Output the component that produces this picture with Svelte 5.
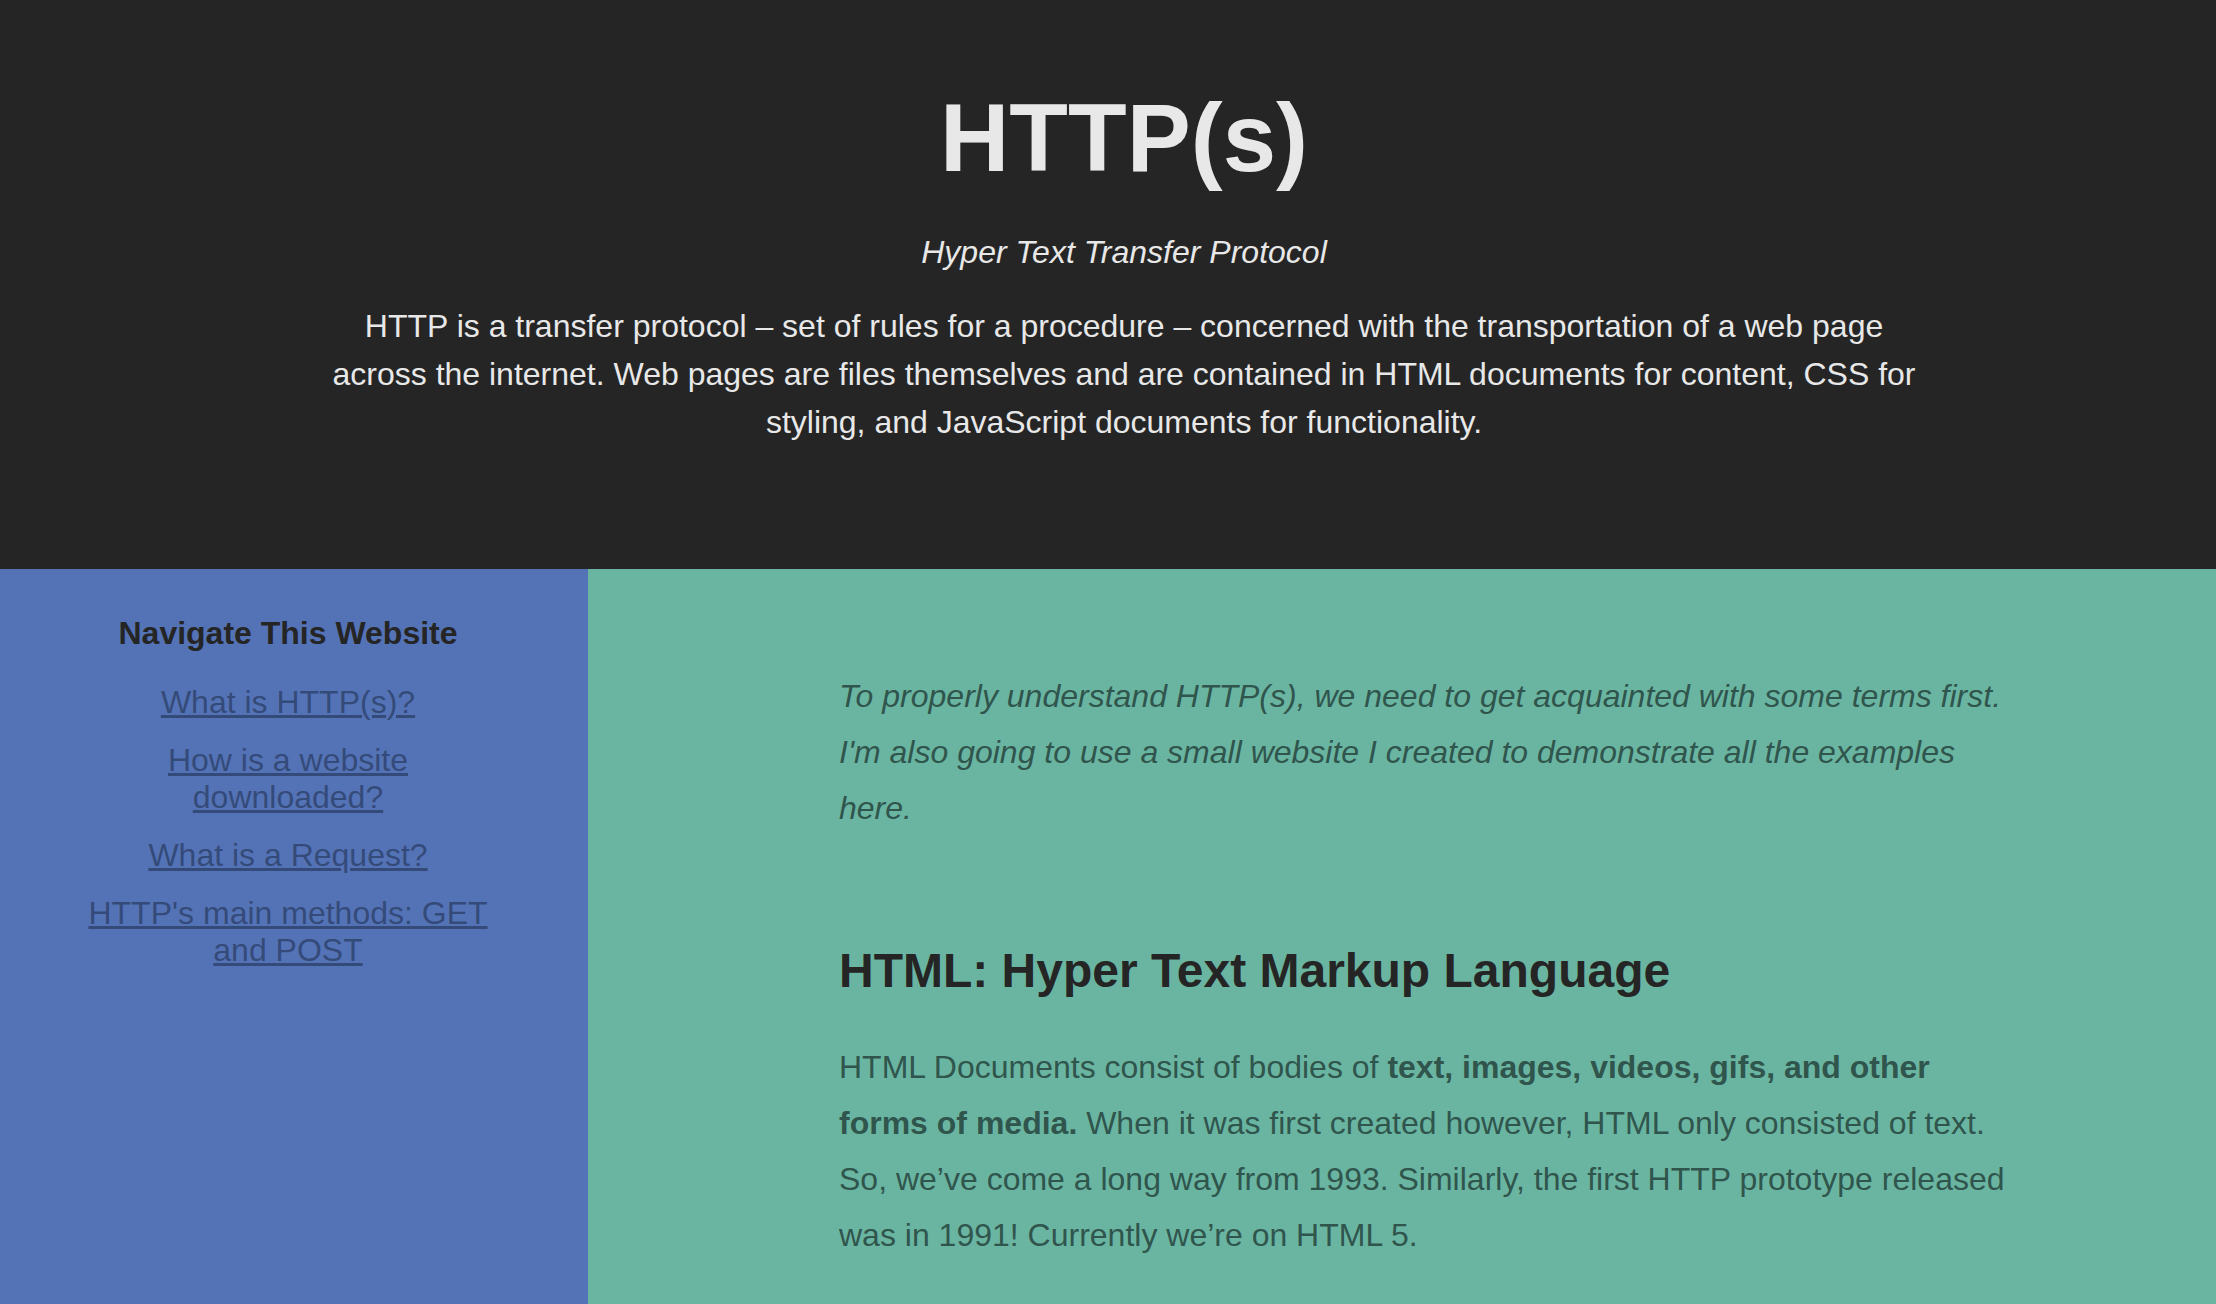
<script>
  const links = [
    { label: 'What is HTTP(s)?', href: '#http' },
    { label: 'How is a website downloaded?', href: '#download' },
    { label: 'What is a Request?', href: '#request' },
    { label: "HTTP's main methods: GET and POST", href: '#methods' }
  ];
</script>

<div class="page">
  <header id="http">
    <div class="intro">
      <h1>HTTP(s)</h1>
      <p class="subtitle"><em>Hyper Text Transfer Protocol</em></p>
      <p>
        HTTP is a transfer protocol – set of rules for a procedure – concerned with the
        transportation of a web page across the internet. Web pages are files themselves and are
        contained in HTML documents for content, CSS for styling, and JavaScript documents for
        functionality.
      </p>
    </div>
  </header>

  <div class="columns">
    <nav aria-labelledby="nav-title">
      <h2 id="nav-title">Navigate This Website</h2>
      <ul>
        {#each links as link}
          <li><a href={link.href}>{link.label}</a></li>
        {/each}
      </ul>
    </nav>

    <main>
      <p>
        <em>
          To properly understand HTTP(s), we need to get acquainted with some terms first. I'm also
          going to use a small website I created to demonstrate all the examples here.
        </em>
      </p>
      <section>
        <h2>HTML: Hyper Text Markup Language</h2>
        <p>
          HTML Documents consist of bodies of
          <strong>text, images, videos, gifs, and other forms of media.</strong>
          When it was first created however, HTML only consisted of text. So, we’ve come a long way
          from 1993. Similarly, the first HTTP prototype released was in 1991! Currently we’re on
          HTML 5.
        </p>
      </section>
    </main>
  </div>
</div>

<style>
  :global(body) {
    margin: 0;
  }

  .page {
    display: flex;
    flex-direction: column;
    min-height: 100vh;
    font-family: Helvetica, 'Liberation Sans', Arial, sans-serif;
    font-size: 32px;
    color: #252525;
  }

  h1,
  h2,
  p,
  ul {
    margin: 0;
    padding: 0;
  }

  header {
    padding: 82px 0 123px 32px;
    background: #252525;
    color: #e8e8e8;
    text-align: center;
    line-height: 48px;
  }

  .intro {
    max-width: 1600px;
    margin: 0 auto;
  }

  h1 {
    font-size: 96px;
    line-height: 112px;
  }

  .subtitle {
    margin: 34px 0 26px;
  }

  .columns {
    flex: 1;
    display: grid;
    grid-template-columns: 588px 1fr;
  }

  nav {
    padding: 46px 92px 46px 80px;
    background: #5473b6;
    text-align: center;
    line-height: 37px;
  }

  nav h2 {
    font-size: 32px;
    margin-bottom: 32px;
  }

  ul {
    display: flex;
    flex-direction: column;
    gap: 21px;
    list-style: none;
  }

  a {
    color: #344b7a;
    text-decoration-thickness: 3px;
    text-underline-offset: 2px;
  }

  main {
    padding: 99px 200px 56px 251px;
    background: #6ab5a2;
    line-height: 56px;
  }

  main p {
    color: #30554d;
  }

  section {
    margin-top: 107px;
  }

  section h2 {
    margin-bottom: 40px;
    font-size: 48px;
  }
</style>
